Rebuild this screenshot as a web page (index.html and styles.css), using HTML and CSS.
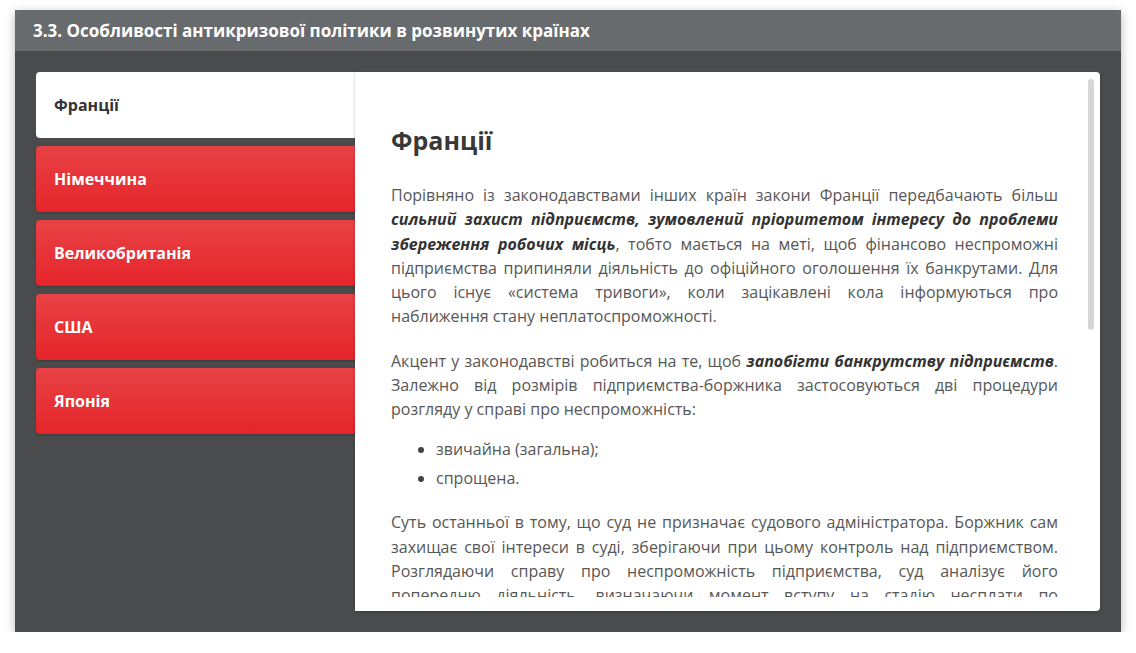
FILE: index.html
```html
<!DOCTYPE html>
<html lang="uk">
<head>
<meta charset="utf-8">
<title>3.3. Особливості антикризової політики</title>
<link rel="stylesheet" href="styles.css">
</head>
<body>
<div class="frame">
  <div class="header">3.3. Особливості антикризової політики в розвинутих країнах</div>
  <div class="body">
    <div class="tabs-wrap">
      <div class="tabs">
        <div class="tab active">Франції</div>
        <div class="tab">Німеччина</div>
        <div class="tab">Великобританія</div>
        <div class="tab">США</div>
        <div class="tab">Японія</div>
      </div>
      <div class="panel">
        <div class="scroll">
          <h2 class="title">Франції</h2>
          <p>Порівняно із законодавствами інших країн закони Франції передбачають більш <b><i>сильний захист підприємств, зумовлений пріоритетом інтересу до проблеми збереження робочих місць</i></b>, тобто мається на меті, щоб фінансово неспроможні підприємства припиняли діяльність до офіційного оголошення їх банкрутами. Для цього існує «система тривоги», коли зацікавлені кола інформуються про наближення стану неплатоспроможності.</p>
          <p>Акцент у законодавстві робиться на те, щоб <b><i>запобігти банкрутству підприємств</i></b>. Залежно від розмірів підприємства-боржника застосовуються дві процедури розгляду у справі про неспроможність:</p>
          <ul>
            <li>звичайна (загальна);</li>
            <li>спрощена.</li>
          </ul>
          <p>Суть останньої в тому, що суд не призначає судового адміністратора. Боржник сам захищає свої інтереси в суді, зберігаючи при цьому контроль над підприємством. Розглядаючи справу про неспроможність підприємства, суд аналізує його попередню діяльність, визначаючи момент вступу на стадію несплати по зобов'язаннях, і приймає рішення щодо подальшої долі підприємства.</p>
        </div>
        <div class="scrollbar"></div>
      </div>
    </div>
  </div>
</div>
</body>
</html>
```

FILE: styles.css
```css
* { box-sizing: border-box; }
html, body { margin: 0; padding: 0; background: #ffffff; }
body {
  font-family: "Open Sans", "Liberation Sans", sans-serif;
  padding: 10px 15px 0 15px;
}
.frame {
  width: 1106px;
  height: 622px;
  display: flex;
  flex-direction: column;
  box-shadow: 0 3px 10px rgba(0, 0, 0, 0.28);
  background: #4a4b4d;
}
.header {
  height: 41px;
  flex: none;
  background: #686b6e;
  color: #ffffff;
  font-weight: 700;
  font-size: 17px;
  line-height: 41px;
  padding-left: 18px;
}
.body {
  flex: 1;
  padding: 21px 21px 21px 21px;
  min-height: 0;
}
.tabs-wrap {
  display: flex;
  height: 100%;
}
.tabs {
  width: 319px;
  flex: none;
  display: flex;
  flex-direction: column;
  gap: 8px;
}
.tab {
  height: 66px;
  flex: none;
  border-radius: 4px 0 0 4px;
  background: linear-gradient(#e84246, #e5252a);
  color: #ffffff;
  font-weight: 700;
  font-size: 16px;
  line-height: 66px;
  padding-left: 18px;
  box-shadow: 0 1px 2px rgba(0, 0, 0, 0.25);
}
.tab.active {
  background: #ffffff;
  color: #333333;
  box-shadow: none;
}
.panel {
  flex: 1;
  position: relative;
  background: #ffffff;
  border-radius: 0 4px 4px 0;
  box-shadow: 0 1px 3px rgba(0, 0, 0, 0.25);
  padding: 0 42px 14px 36px;
  display: flex;
  flex-direction: column;
}
.scroll {
  flex: 1;
  overflow: hidden;
  min-height: 0;
  padding-top: 53px;
  padding-right: 0;
  color: #575757;
  font-size: 16px;
  line-height: 24.3px;
  text-align: justify;
}
.title {
  margin: 0 0 27px 0;
  font-size: 25px;
  line-height: 31px;
  font-weight: 700;
  color: #383838;
  text-align: left;
}
.scroll p { margin: 0 0 20px 0; }
.scroll b { color: #333333; }
.scroll ul {
  margin: -5px 0 20px 0;
  padding-left: 45px;
}
.scroll li {
  margin-bottom: 5px;
}
.scroll li::marker { color: #444444; }
.scrollbar {
  position: absolute;
  right: 6px;
  top: 7px;
  width: 6px;
  height: 251px;
  border-radius: 3px;
  background: #d6d6d6;
}
```
